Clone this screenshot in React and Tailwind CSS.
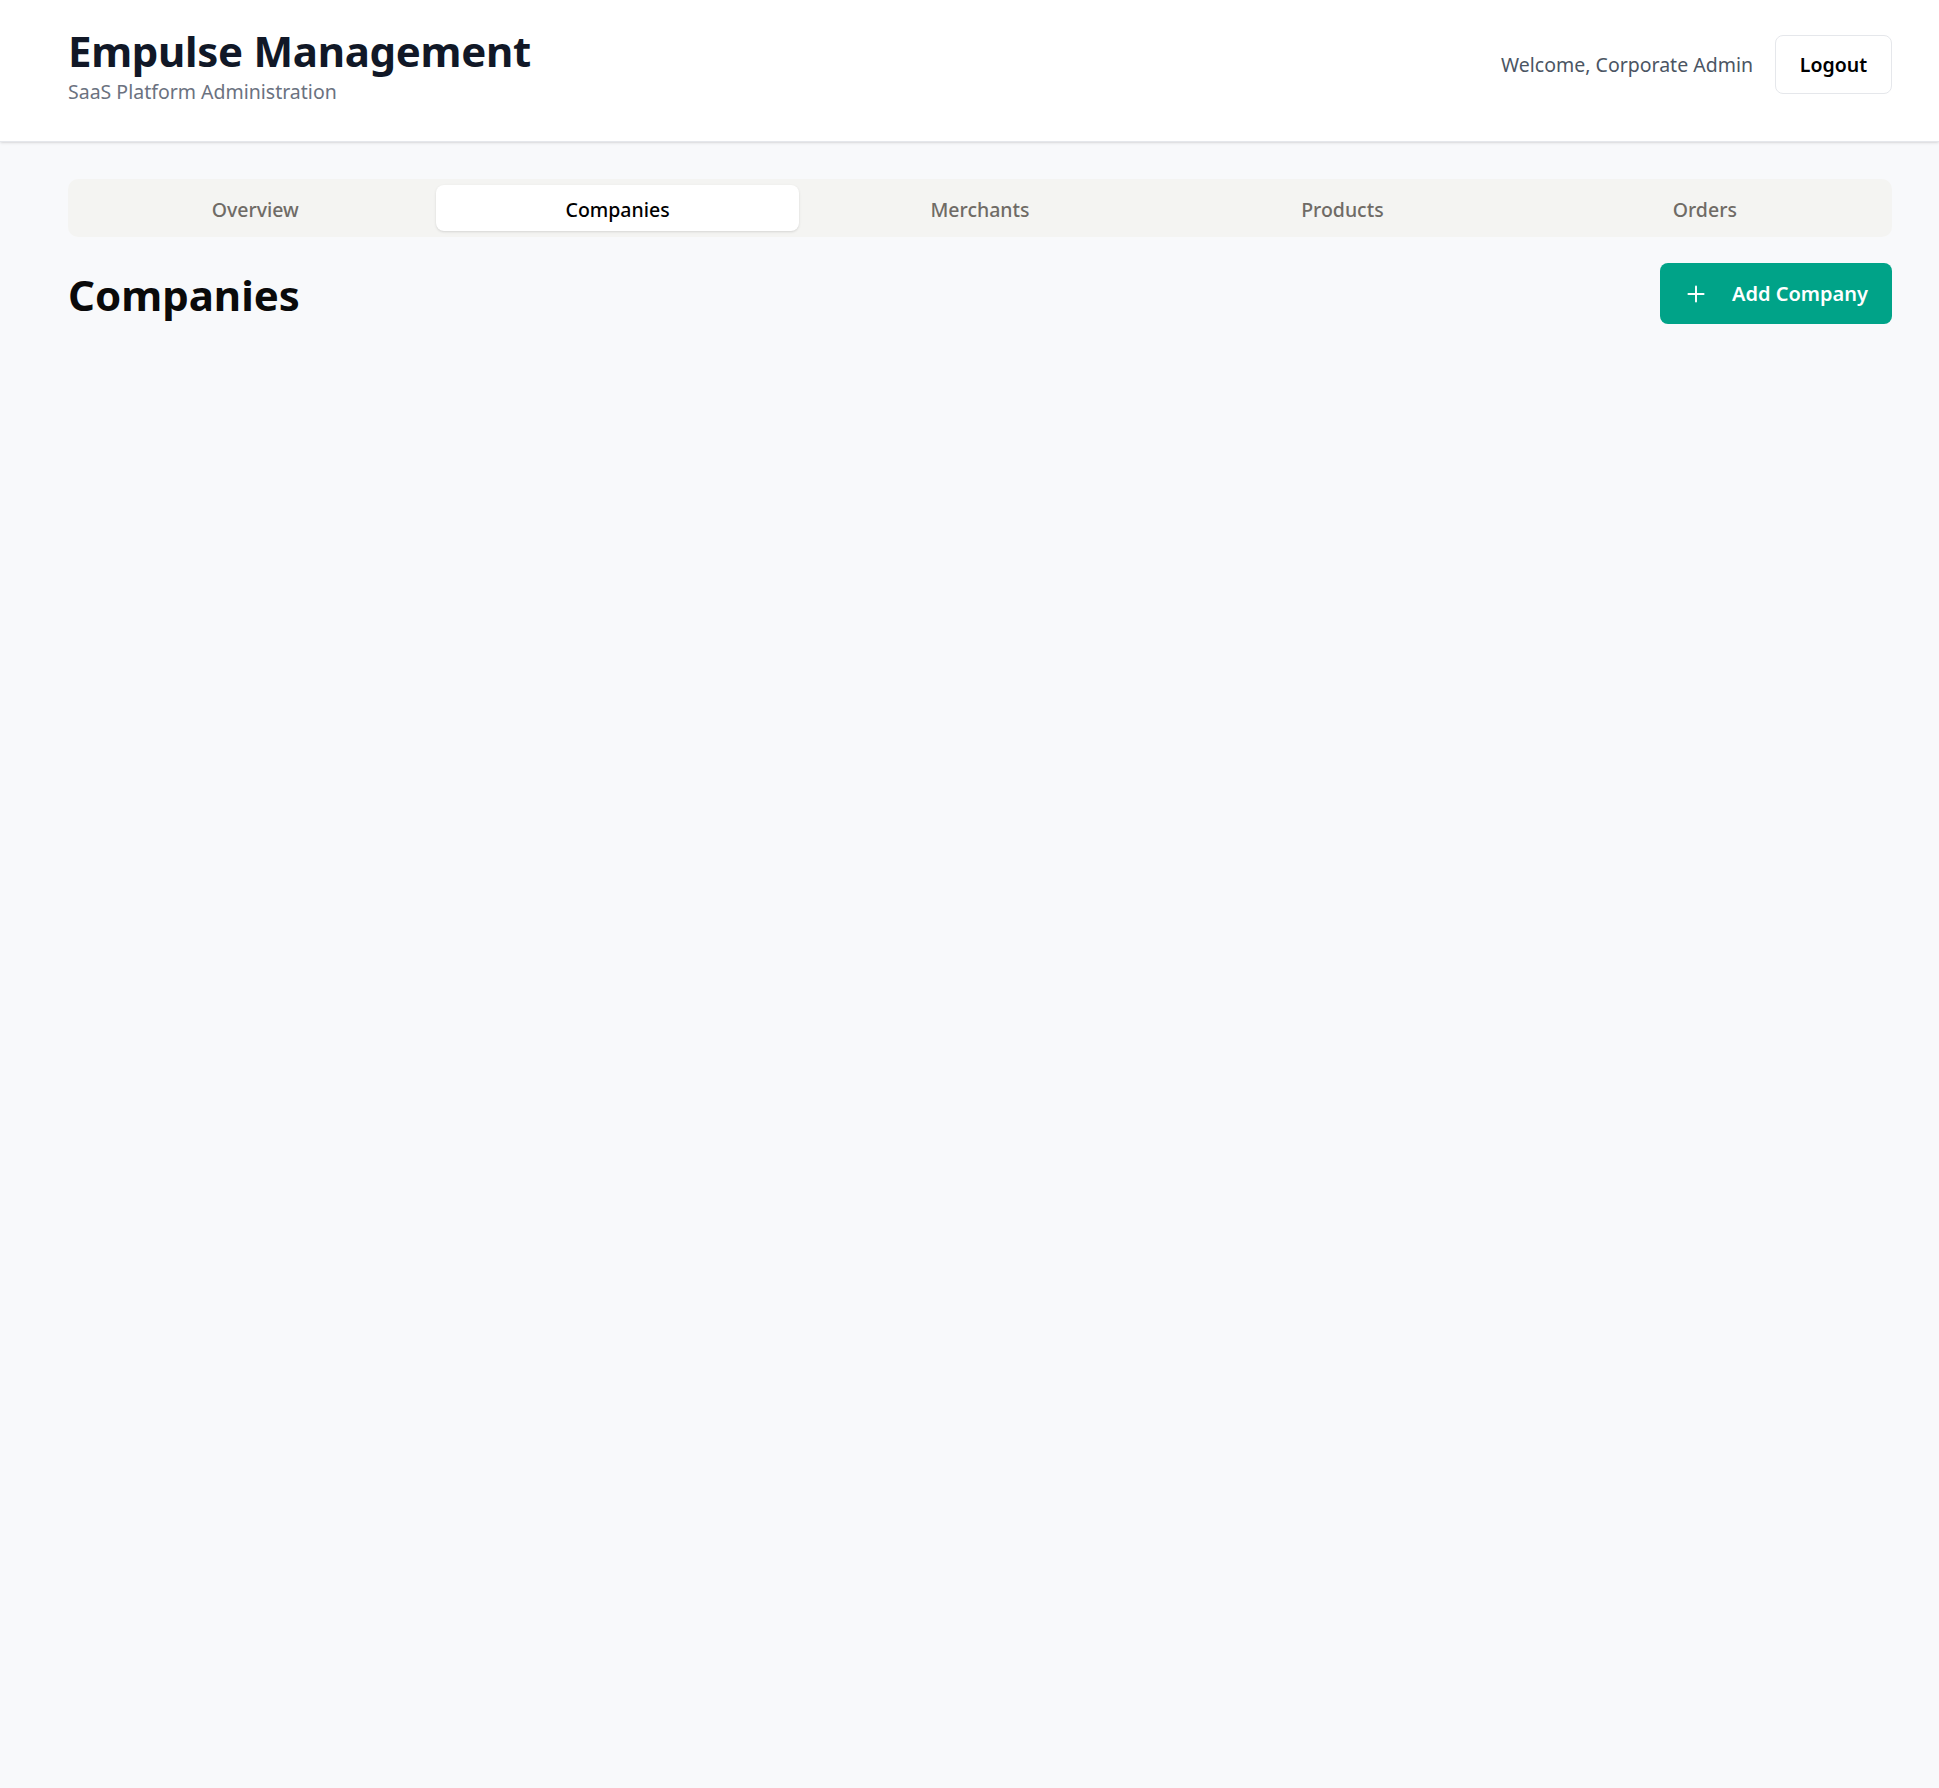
import { Plus } from 'lucide-react';

const tabs = ['Overview', 'Companies', 'Merchants', 'Products', 'Orders'];

export default function App() {
  const active = 'Companies';

  return (
    <div className="min-h-screen bg-[#f8f9fb] font-['Noto_Sans',_'Open_Sans',_sans-serif]">
      {/* Header */}
      <header className="bg-white border-b border-[#e5e7eb] shadow-sm">
        <div className="ml-[68px] mr-[47px] h-[141px] flex items-center justify-between">
          <div className="-mt-[12px]">
            <h1 className="text-[42px] leading-[52px] font-bold text-[#111827] tracking-[-0.3px]">
              Empulse Management
            </h1>
            <p className="mt-[3px] text-[19.5px] leading-[24px] text-[#6b7280]">SaaS Platform Administration</p>
          </div>
          <div className="flex items-center gap-[22px] -mt-[12px]">
            <span className="text-[19.5px] text-[#4b5563]">Welcome, Corporate Admin</span>
            <button className="h-[59px] w-[117px] rounded-[8px] border border-[#e5e7eb] bg-white text-[19.5px] font-semibold text-black">
              Logout
            </button>
          </div>
        </div>
      </header>

      {/* Main */}
      <main className="ml-[68px] mr-[47px] pt-[37px]">
        <div className="grid grid-cols-5 p-[6px] rounded-[10px] bg-[#f4f4f2] h-[58px]">
          {tabs.map((t) => (
            <button
              key={t}
              className={
                t === active
                  ? 'pt-[4px] rounded-[8px] bg-white shadow-sm text-[19.5px] font-medium text-black'
                  : 'pt-[4px] rounded-[8px] text-[19.5px] font-medium text-[#6f6b66]'
              }
            >
              {t}
            </button>
          ))}
        </div>

        <div className="mt-[26px] flex items-center justify-between">
          <h2 className="text-[42px] font-bold text-[#0a0a0a] leading-none mt-[3px]">Companies</h2>
          <button className="h-[61px] pl-[23px] pr-[24px] rounded-[8px] bg-[#00a388] text-white flex items-center gap-[23px] text-[20px] font-semibold">
            <Plus className="w-[26px] h-[26px]" strokeWidth={1.8} />
            Add Company
          </button>
        </div>
      </main>
    </div>
  );
}
